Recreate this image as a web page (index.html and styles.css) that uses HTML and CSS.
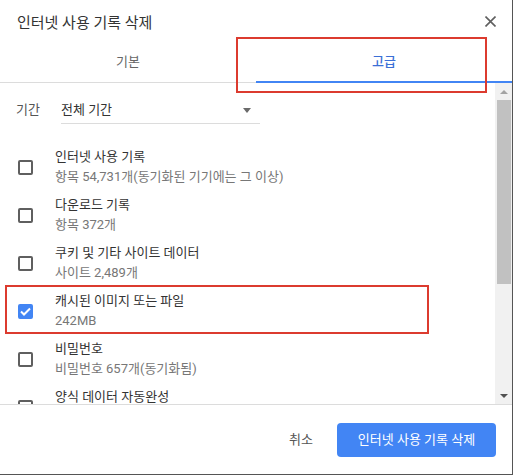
FILE: index.html
```html
<!DOCTYPE html>
<html lang="ko">
<head>
<meta charset="utf-8">
<title>인터넷 사용 기록 삭제</title>
<link rel="stylesheet" href="styles.css">
</head>
<body>
<div class="dialog">
  <div class="header">
    <div class="title">인터넷 사용 기록 삭제</div>
    <svg class="close" width="11" height="11" viewBox="0 0 11 11"><path d="M0.5 0.5 L10.5 10.5 M10.5 0.5 L0.5 10.5" stroke="#5f5f5f" stroke-width="1.6" fill="none"/></svg>
  </div>
  <div class="tabs">
    <div class="tab">기본</div>
    <div class="tab active">고급</div>
  </div>
  <div class="main">
    <div class="content">
      <div class="range">
        <span class="range-label">기간</span>
        <div class="select">
          <span>전체 기간</span>
          <span class="caret"></span>
        </div>
      </div>
      <div class="item">
        <span class="check"></span>
        <div class="text"><div class="t">인터넷 사용 기록</div><div class="s">항목 54,731개(동기화된 기기에는 그 이상)</div></div>
      </div>
      <div class="item">
        <span class="check"></span>
        <div class="text"><div class="t">다운로드 기록</div><div class="s">항목 372개</div></div>
      </div>
      <div class="item">
        <span class="check"></span>
        <div class="text"><div class="t">쿠키 및 기타 사이트 데이터</div><div class="s">사이트 2,489개</div></div>
      </div>
      <div class="item">
        <span class="check checked"><svg width="11" height="9" viewBox="0 0 11 9"><path d="M1 4.5 L4 7.5 L10 1.5" stroke="#fff" stroke-width="2" fill="none"/></svg></span>
        <div class="text"><div class="t">캐시된 이미지 또는 파일</div><div class="s">242MB</div></div>
      </div>
      <div class="item">
        <span class="check"></span>
        <div class="text"><div class="t">비밀번호</div><div class="s">비밀번호 657개(동기화됨)</div></div>
      </div>
      <div class="item">
        <span class="check"></span>
        <div class="text"><div class="t">양식 데이터 자동완성</div><div class="s empty"></div></div>
      </div>
    </div>
    <div class="scrollbar">
      <div class="sb-btn"><span class="arrow-up"></span></div>
      <div class="thumb"></div>
      <div class="track"></div>
      <div class="sb-btn"><span class="arrow-down"></span></div>
    </div>
  </div>
  <div class="footer">
    <button class="btn cancel">취소</button>
    <button class="btn primary">인터넷 사용 기록 삭제</button>
  </div>
  <div class="mark mark-tab"></div>
  <div class="mark mark-item"></div>
</div>
</body>
</html>
```

FILE: styles.css
```css
* { box-sizing: border-box; }
html, body { margin: 0; padding: 0; background: #fff; }
body {
  width: 513px;
  height: 475px;
  overflow: hidden;
  font-family: Roboto, "Noto Sans CJK KR", sans-serif;
  color: #333;
}
.dialog {
  position: relative;
  width: 513px;
  height: 475px;
  border-right: 1px solid #555;
  border-bottom: 1px solid #555;
  display: flex;
  flex-direction: column;
  background: #fff;
}
.header {
  height: 38px;
  display: flex;
  align-items: center;
  justify-content: space-between;
  padding: 7px 16px 0 17px;
}
.title {
  font-size: 15px;
  line-height: 22px;
  color: #333;
}
.close { display: block; margin-top: -3px; }
.tabs {
  height: 45px;
  display: flex;
  align-items: flex-end;
}
.tab {
  flex: 1;
  height: 44px;
  text-align: center;
  font-size: 13px;
  line-height: 20px;
  padding-top: 13px;
  color: #666;
  border-bottom: 1px solid #dcdcdc;
}
.tab.active {
  height: 45px;
  padding-top: 14px;
  color: #3b6fd6;
  font-weight: 500;
  border-bottom: 2px solid #4285f4;
}
.main {
  height: 322px;
  display: flex;
  border-bottom: 1px solid #dcdcdc;
}
.content {
  flex: 1;
  overflow: hidden;
  padding: 16px 0 0 16px;
}
.range {
  display: flex;
  align-items: flex-start;
  font-size: 13px;
  line-height: 22px;
  margin-bottom: 19px;
}
.range-label { width: 45px; color: #555; }
.select {
  width: 199px;
  height: 25px;
  border-bottom: 1px solid #dcdcdc;
  display: flex;
  justify-content: space-between;
  align-items: flex-start;
  padding-right: 9px;
  color: #333;
}
.caret {
  margin-top: 9px;
  width: 0;
  height: 0;
  border-left: 4.5px solid transparent;
  border-right: 4.5px solid transparent;
  border-top: 5px solid #6a6a6a;
}
.item {
  height: 48px;
  padding: 4px 0;
  display: flex;
  align-items: center;
}
.check {
  width: 15px;
  height: 15px;
  margin-left: 2px;
  margin-right: 22px;
  border: 2px solid #5f5f5f;
  border-radius: 2px;
  flex: none;
  display: flex;
  align-items: center;
  justify-content: center;
}
.check.checked {
  background: #4285f4;
  border-color: #4285f4;
}
.check svg { display: block; }
.text { font-size: 13px; line-height: 20px; white-space: nowrap; }
.t { color: #333; }
.s { color: #777; }
.s.empty { height: 20px; }
.scrollbar {
  width: 17px;
  background: #f1f1f1;
  display: flex;
  flex-direction: column;
  flex: none;
}
.sb-btn {
  height: 17px;
  display: flex;
  align-items: center;
  justify-content: center;
}
.arrow-up {
  width: 0; height: 0;
  border-left: 4px solid transparent;
  border-right: 4px solid transparent;
  border-bottom: 4px solid #a3a3a3;
}
.arrow-down {
  width: 0; height: 0;
  border-left: 4px solid transparent;
  border-right: 4px solid transparent;
  border-top: 4px solid #505050;
}
.thumb {
  height: 184px;
  margin: 0 1px 0 2px;
  background: #c1c1c1;
}
.track { flex: 1; }
.footer {
  flex: 1;
  display: flex;
  justify-content: flex-end;
  align-items: center;
  padding: 0 16px 0 0;
  gap: 8px;
}
.btn {
  font-family: Roboto, "Noto Sans CJK KR", sans-serif;
  font-size: 13px;
  line-height: 20px;
  height: 34px;
  border: 0;
  border-radius: 4px;
  padding: 0 16px;
  background: transparent;
  cursor: pointer;
}
.cancel { color: #555; }
.primary {
  background: #4285f4;
  color: #fff;
  width: 159px;
  padding: 0;
}
.mark {
  position: absolute;
  border: 2px solid #dc3b2f;
  pointer-events: none;
}
.mark-tab { left: 236px; top: 37px; width: 251px; height: 56px; }
.mark-item { left: 5px; top: 285px; width: 424px; height: 49px; }
```
